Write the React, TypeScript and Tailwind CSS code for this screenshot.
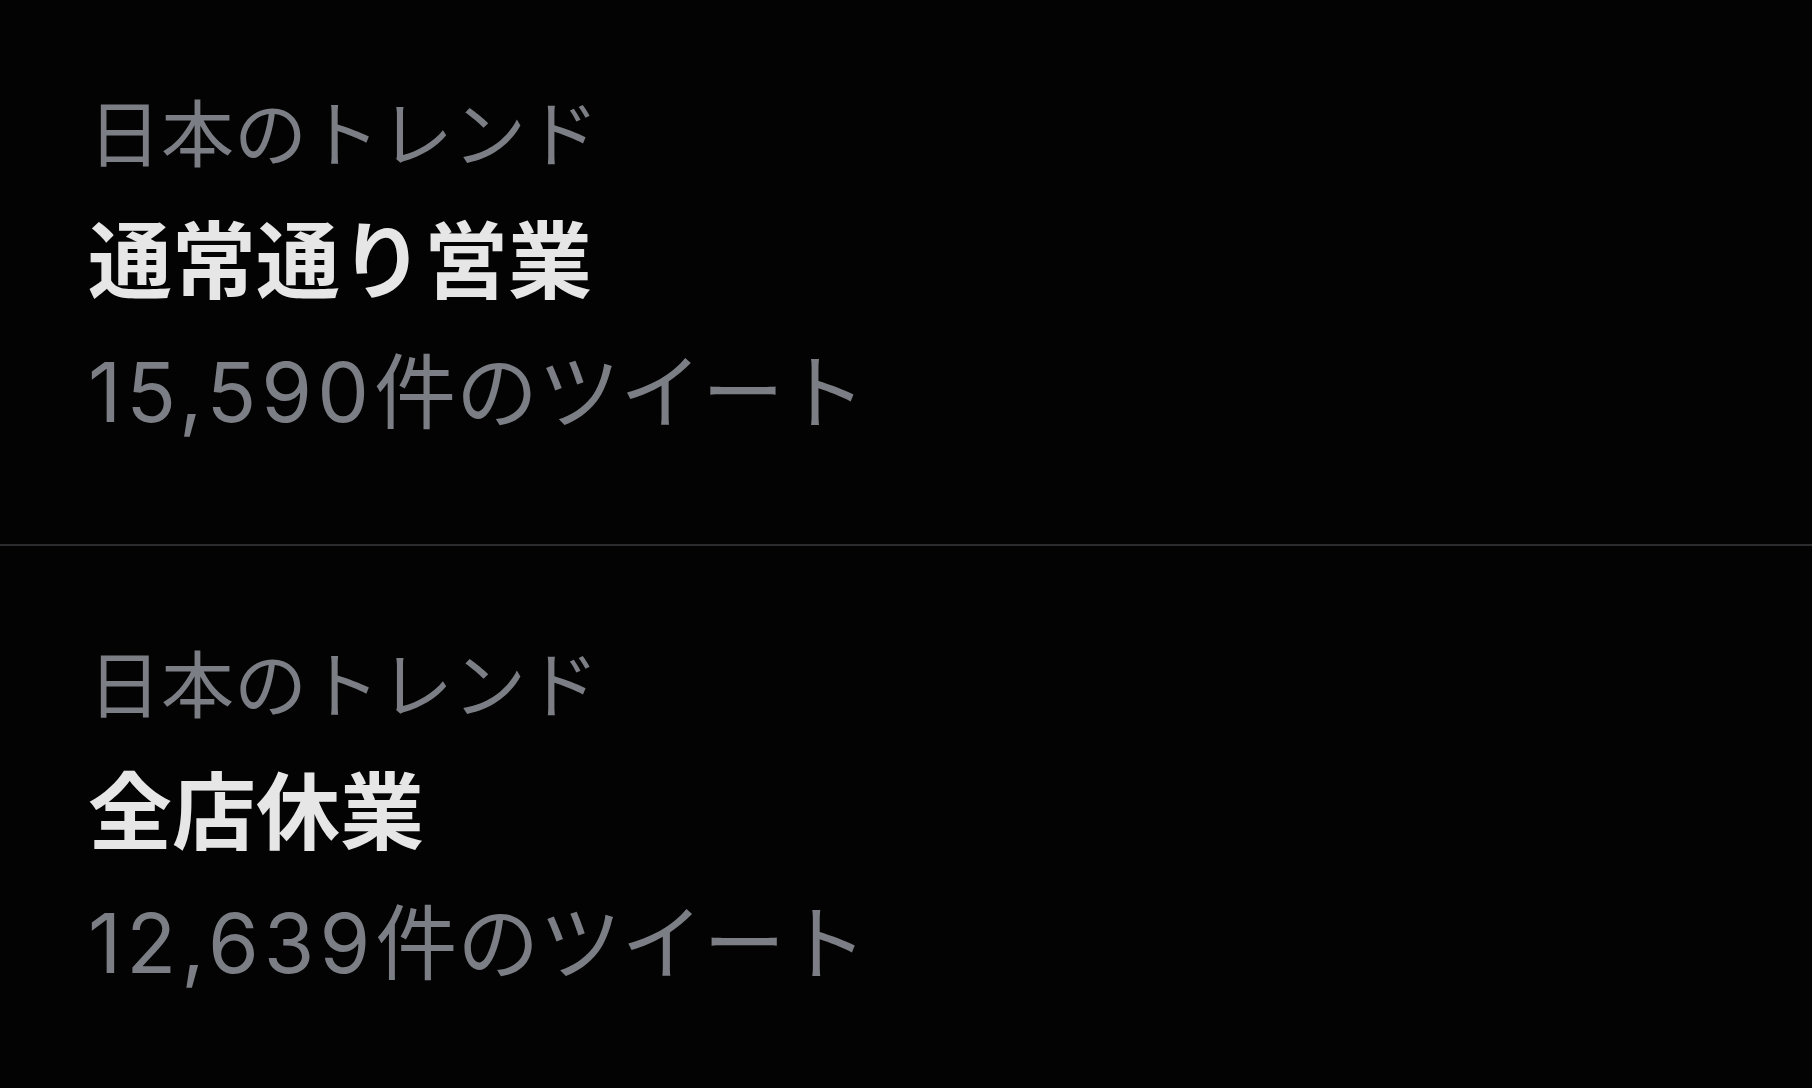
const trends = [
  { label: "日本のトレンド", title: "通常通り営業", num: "15,590", count: "件のツイート" },
  { label: "日本のトレンド", title: "全店休業", num: "12,639", count: "件のツイート" },
];

export default function App() {
  return (
    <div
      className="min-h-screen w-full bg-[#030303] text-[#e6e6e6]"
      style={{ fontFamily: '"Inter", "Noto Sans CJK JP", sans-serif' }}
    >
      {trends.map((t, i) => (
        <div
          key={i}
          className={`px-[88px] ${i === 0 ? "pt-[71px] pb-[83px] border-b-2 border-[#2c2c2e]" : "pt-[76px]"}`}
        >
          <p className="text-[73px] leading-[128px] text-[#7b7e84]">{t.label}</p>
          <p className="text-[84px] font-bold leading-[126px]">{t.title}</p>
          <p className="text-[82px] leading-[136px] text-[#7b7e84]">
            <span className="tracking-[5px]">{t.num}</span>
            {t.count}
          </p>
        </div>
      ))}
    </div>
  );
}
